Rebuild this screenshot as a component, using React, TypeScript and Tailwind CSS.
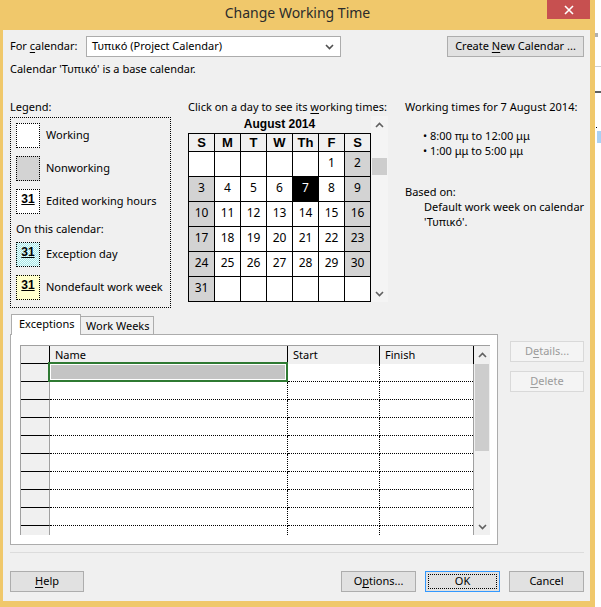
import React from "react";

const weeks: (number | null)[][] = [
  [null, null, null, null, null, 1, 2],
  [3, 4, 5, 6, 7, 8, 9],
  [10, 11, 12, 13, 14, 15, 16],
  [17, 18, 19, 20, 21, 22, 23],
  [24, 25, 26, 27, 28, 29, 30],
  [31, null, null, null, null, null, null],
];
const heads = ["S", "M", "T", "W", "Th", "F", "S"];

function Chev({ up, color = "#606060" }: { up?: boolean; color?: string }) {
  return (
    <svg width="9" height="6" viewBox="0 0 9 6">
      <path
        d={up ? "M1 5L4.5 1.5L8 5" : "M1 1L4.5 4.5L8 1"}
        fill="none"
        stroke={color}
        strokeWidth="1.6"
      />
    </svg>
  );
}

function U({ children }: { children: React.ReactNode }) {
  return <span className="underline underline-offset-[2px]">{children}</span>;
}

function Swatch({ kind }: { kind: "w" | "n" | "e" | "x" | "y" }) {
  let bg = "bg-white";
  if (kind === "n") bg = "bg-[#d3d3d3]";
  if (kind === "x")
    bg =
      "bg-[image:repeating-conic-gradient(#a9e6e6_0%_25%,#e9fdfd_0%_50%)] bg-[length:2px_2px]";
  if (kind === "y") bg = "bg-[#ffffcc]";
  return (
    <div
      className={`w-[24px] h-[25px] shrink-0 border border-dotted border-black ${bg} flex justify-center`}
    >
      {kind !== "w" && kind !== "n" && (
        <span className="mt-[3px] font-['Liberation_Sans',sans-serif] font-bold text-[12px] leading-[13px] underline underline-offset-[1px]">
          31
        </span>
      )}
    </div>
  );
}

function LegendItem({
  kind,
  label,
  className = "",
}: {
  kind: "w" | "n" | "e" | "x" | "y";
  label: string;
  className?: string;
}) {
  return (
    <div className={`flex items-center ${className}`}>
      <Swatch kind={kind} />
      <span className="ml-[6px] whitespace-nowrap">{label}</span>
    </div>
  );
}

function Btn({
  children,
  className = "",
}: {
  children: React.ReactNode;
  className?: string;
}) {
  return (
    <div
      className={`h-[21px] shrink-0 flex items-center justify-center border border-[#adadad] bg-[#e1e1e1] whitespace-nowrap ${className}`}
    >
      {children}
    </div>
  );
}

function DisabledBtn({ children }: { children: React.ReactNode }) {
  return (
    <div className="h-[21px] w-[74px] flex items-center justify-center border border-[#d9d9d9] bg-[#f4f4f4] text-[#9b9b9b] whitespace-nowrap">
      {children}
    </div>
  );
}

function Calendar() {
  return (
    <div className="flex">
      <div className="flex flex-col w-[183px]">
        <div className="h-[18px] leading-[18px] text-center font-['Liberation_Sans',sans-serif] font-bold text-[12px]">
          August 2014
        </div>
        <div className="border-l border-t border-black flex flex-col font-['Noto_Sans',sans-serif] text-[12px]">
          <div className="flex">
            {heads.map((h, i) => (
              <div
                key={i}
                className="w-[26px] h-[18px] border-r border-b border-black bg-[#f0f0f0] flex items-center justify-center font-['Liberation_Sans',sans-serif] font-bold text-[13px] leading-[16px]"
              >
                {h}
              </div>
            ))}
          </div>
          {weeks.map((w, r) => (
            <div key={r} className="flex">
              {w.map((d, i) => {
                let bg = "bg-white text-black";
                if (d !== null && (i === 0 || i === 6)) bg = "bg-[#d3d3d3] text-black";
                if (d === 7) bg = "bg-black text-white";
                return (
                  <div
                    key={i}
                    className={`w-[26px] h-[25px] border-r border-b border-black flex items-center justify-center leading-[16px] pb-[3px] ${bg}`}
                  >
                    {d ?? ""}
                  </div>
                );
              })}
            </div>
          ))}
        </div>
      </div>
      <div className="w-[17px] mt-[1px] h-[186px] bg-[#f4f4f4] flex flex-col">
        <div className="h-[17px] flex items-center justify-center">
          <Chev up />
        </div>
        <div className="mt-[25px] mx-[1px] h-[17px] bg-[#cdcdcd]" />
        <div className="mt-auto h-[17px] flex items-center justify-center">
          <Chev />
        </div>
      </div>
    </div>
  );
}

function ExceptionsTable() {
  const rows = Array.from({ length: 9 });
  return (
    <div className="mt-[10px] ml-[9px] w-[470px] h-[190px] flex border-t border-l border-[#a0a0a0] overflow-hidden">
      <div className="flex flex-col w-[452px]">
        <div className="flex h-[18px] shrink-0">
          <div className="w-[29px] h-[18px] bg-[#f0f0f0] border-r border-b border-black" />
          <div className="w-[238px] h-[18px] bg-[#f0f0f0] border-r border-black pl-[5px] pt-[1px] leading-[16px]">
            Name
          </div>
          <div className="w-[92px] h-[18px] bg-[#f0f0f0] border-r border-black pl-[5px] pt-[1px] leading-[16px]">
            Start
          </div>
          <div className="w-[93px] h-[18px] bg-[#f0f0f0] pl-[5px] pt-[1px] leading-[16px]">
            Finish
          </div>
        </div>
        {rows.map((_, r) => (
          <div key={r} className="flex h-[18px] shrink-0">
            <div className="w-[29px] h-[18px] bg-[#f0f0f0] border-r border-b border-r-[#a0a0a0] border-b-black" />
            <div className="relative w-[238px] h-[18px] bg-white border-r border-b border-dotted border-black">
              {r === 0 && (
                <div className="absolute -left-[2px] -top-[2px] right-[-1px] -bottom-[1px] z-10 border-2 border-[#2f7a33] bg-white p-[1px]">
                  <div className="w-full h-full bg-[#c4c4c4]" />
                </div>
              )}
            </div>
            <div className="w-[92px] h-[18px] bg-white border-r border-b border-dotted border-black" />
            <div className="w-[93px] h-[18px] bg-white border-b border-dotted border-black" />
          </div>
        ))}
        <div className="flex h-[9px] shrink-0">
          <div className="w-[29px] h-[9px] bg-[#f0f0f0] border-r border-[#a0a0a0]" />
          <div className="w-[238px] h-[9px] bg-white border-r border-dotted border-black" />
          <div className="w-[92px] h-[9px] bg-white border-r border-dotted border-black" />
          <div className="w-[93px] h-[9px] bg-white" />
        </div>
      </div>
      <div className="w-[18px] flex flex-col bg-[#f0f0f0]">
        <div className="h-[18px] shrink-0 border-l border-black flex items-center justify-center">
          <Chev up />
        </div>
        <div className="flex-1 border-l border-[#a0a0a0] flex flex-col">
          <div className="mx-[1px] h-[87px] bg-[#cdcdcd]" />
          <div className="mt-auto h-[16px] flex items-center justify-center">
            <Chev />
          </div>
        </div>
      </div>
    </div>
  );
}

export default function App() {
  return (
    <div className="w-[601px] h-[607px] flex bg-white font-['Noto_Sans',sans-serif] text-[11px] text-black overflow-hidden">
      <div className="w-[595px] h-[607px] bg-[#f0c86b] flex flex-col shrink-0">
        {/* Title bar */}
        <div className="h-[30px] relative shrink-0">
          <div className="pt-[4px] leading-[18px] text-center text-[14px] text-[#2b2b2b]">
            Change Working Time
          </div>
          <div className="absolute top-0 right-[5px] w-[43px] h-[19px] bg-[#c75050] flex items-center justify-center">
            <svg width="10" height="10" viewBox="0 0 10 10">
              <path d="M1 1L9 9M9 1L1 9" stroke="white" strokeWidth="1.6" />
            </svg>
          </div>
        </div>

        {/* Client area */}
        <div className="ml-[3px] mr-[5px] mb-[6px] flex-1 bg-[#f0f0f0] flex flex-col">
          {/* Top row */}
          <div className="flex items-center mt-[6px] h-[21px] shrink-0">
            <div className="ml-[7px] w-[76px] whitespace-nowrap">
              For <U>c</U>alendar:
            </div>
            <div className="w-[255px] h-[21px] bg-white border border-[#acacac] flex items-center pl-[5px] pr-[6px]">
              <span className="flex-1 whitespace-nowrap">Τυπικό (Project Calendar)</span>
              <Chev color="#505050" />
            </div>
            <Btn className="ml-[106px] w-[137px]">
              <span>
                Create <U>N</U>ew Calendar ...
              </span>
            </Btn>
          </div>
          <div className="mt-[4px] ml-[7px] h-[16px] leading-[16px] whitespace-nowrap">
            Calendar 'Τυπικό' is a base calendar.
          </div>

          {/* Middle row */}
          <div className="flex mt-[22px] h-[209px] shrink-0">
            <div className="ml-[7px] w-[161px] flex flex-col">
              <div className="h-[16px] leading-[16px]">Legend:</div>
              <div className="mt-[2px] h-[191px] border border-dotted border-black pt-[5px] pl-[5px] flex flex-col">
                <LegendItem kind="w" label="Working" />
                <LegendItem kind="n" label="Nonworking" className="mt-[8px]" />
                <LegendItem kind="e" label="Edited working hours" className="mt-[8px]" />
                <div className="mt-[7px] h-[16px] leading-[16px] whitespace-nowrap">
                  On this calendar:
                </div>
                <LegendItem kind="x" label="Exception day" className="mt-[5px]" />
                <LegendItem kind="y" label="Nondefault work week" className="mt-[8px]" />
              </div>
            </div>

            <div className="ml-[17px] w-[200px] flex flex-col">
              <div className="h-[16px] leading-[16px] whitespace-nowrap">
                Click on a day to see its <U>w</U>orking times:
              </div>
              <Calendar />
            </div>

            <div className="ml-[17px] flex flex-col">
              <div className="h-[16px] leading-[16px] whitespace-nowrap">
                Working times for 7 August 2014:
              </div>
              <div className="mt-[13px] pl-[18px] leading-[15px] whitespace-nowrap">
                <div>• 8:00 πμ to 12:00 μμ</div>
                <div>• 1:00 μμ to 5:00 μμ</div>
              </div>
              <div className="mt-[26px] leading-[15px]">Based on:</div>
              <div className="pl-[19px] leading-[15px] whitespace-nowrap">
                <div>Default work week on calendar</div>
                <div>'Τυπικό'.</div>
              </div>
            </div>
          </div>

          {/* Lower section */}
          <div className="flex mt-[6px] shrink-0">
            <div className="ml-[7px] w-[488px] flex flex-col">
              <div className="flex h-[20px] items-end pl-[1px]">
                <div className="relative z-10 h-[21px] -mb-[1px] w-[70px] border-l border-t border-r border-[#acacac] bg-white pl-[7px] pt-[1px] leading-[16px]">
                  Exceptions
                </div>
                <div className="h-[18px] w-[73px] border-t border-r border-[#acacac] bg-[#f0f0f0] pl-[5px] pt-[1px] leading-[15px] whitespace-nowrap">
                  Work Weeks
                </div>
              </div>
              <div className="h-[211px] border border-[#acacac] bg-white">
                <ExceptionsTable />
              </div>
            </div>
            <div className="ml-[12px] mt-[27px] flex flex-col gap-[9px]">
              <DisabledBtn>
                <span>
                  D<U>e</U>tails...
                </span>
              </DisabledBtn>
              <DisabledBtn>
                <span>
                  <U>D</U>elete
                </span>
              </DisabledBtn>
            </div>
          </div>

          <div className="mt-[7px] ml-[7px] w-[574px] h-px bg-[#dcdcdc] shrink-0" />

          {/* Bottom buttons */}
          <div className="flex mt-[18px] ml-[7px] shrink-0">
            <Btn className="w-[74px]">
              <span>
                <U>H</U>elp
              </span>
            </Btn>
            <Btn className="ml-[257px] w-[75px]">
              <span>
                O<U>p</U>tions...
              </span>
            </Btn>
            <div className="ml-[9px] w-[75px] h-[21px] border border-[#3399ff] bg-[#e1e1e1] p-[2px]">
              <div className="w-full h-full border border-dotted border-black flex items-center justify-center">
                OK
              </div>
            </div>
            <Btn className="ml-[9px] w-[75px]">Cancel</Btn>
          </div>
        </div>
      </div>

      {/* Background strip behind window */}
      <div className="w-[6px] flex flex-col">
        <div className="mt-[33px] h-[4px] w-[3px] bg-[#b0b0b0]" />
        <div className="mt-[29px] h-px bg-[#cfcfcf]" />
        <div className="mt-[24px] h-[2px] bg-[#606060]" />
        <div className="mt-[34px] ml-[1px] h-px w-px bg-black" />
        <div className="mt-[3px] ml-[2px] h-[12px] bg-[#a9d1f5]" />
      </div>
    </div>
  );
}
